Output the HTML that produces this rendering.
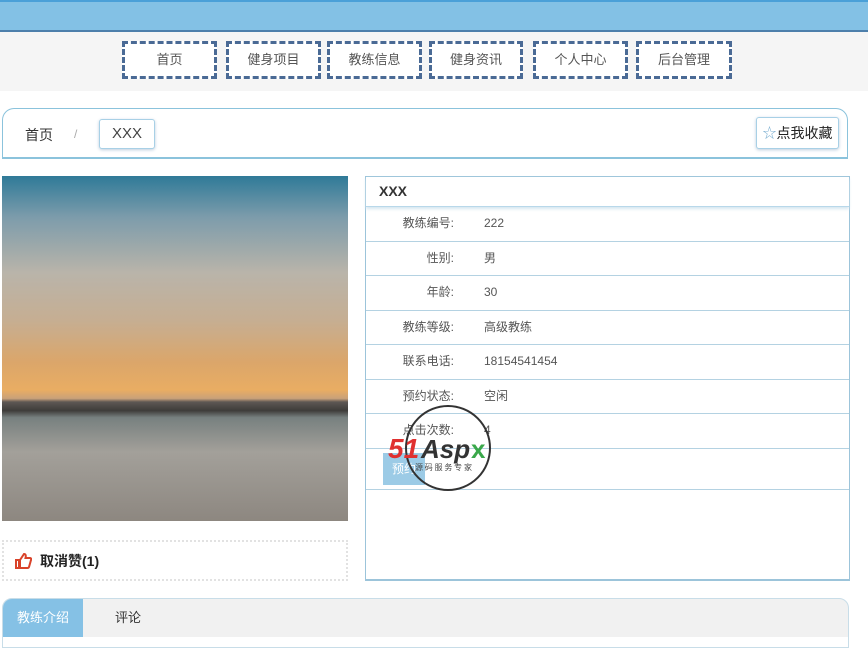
<!DOCTYPE html>
<html><head><meta charset="utf-8"><style>
*{margin:0;padding:0;box-sizing:border-box}
body{width:868px;height:641px;overflow:hidden;background:#fff;font-family:"Liberation Sans","Noto Sans CJK SC",sans-serif;position:relative;color:#333}
.a{position:absolute}
.top{left:0;top:0;width:868px;height:32px;background:#83c1e5;border-top:2px solid #4aa0d8;border-bottom:2px solid #4d7fab}
.navbg{left:0;top:32px;width:868px;height:59px;background:#f5f5f5}
.nav{top:41px;height:38px;border:3px dashed #4a6a95;background:#fff;font-size:13px;color:#555;text-align:center;line-height:32px}
.bc{left:2px;top:108px;width:846px;height:51px;border:1px solid #8bc3dc;border-top-left-radius:12px;border-top-right-radius:12px;border-bottom:2px solid #8bc3dc}
.btn{border:1px solid #a8d0e6;border-radius:3px;box-shadow:0 1px 3px #bcd;background:#fff;font-size:15px;text-align:center}
.img{left:2px;top:176px;width:346px;height:345px;background:linear-gradient(180deg,#2f7a98 0%,#7d9cab 12%,#b9b4aa 28%,#c6ae92 42%,#dba66a 54%,#e9ad63 62%,#c9a17a 64.5%,#5d5753 65.5%,#3e3c3a 68%,#77807f 70%,#a3a09a 80%,#8d8780 100%)}
.like{left:2px;top:540px;width:346px;height:41px;border:2px dotted #e2e2e2;font-size:14px;font-weight:bold;color:#222;line-height:38px;padding-left:36px}
.info{left:365px;top:176px;width:485px;height:405px;border:1px solid #9cc4da;border-bottom:2px solid #9cc4da}
.hd{height:30px;border-bottom:1px solid #b8d8ea;box-shadow:0 2px 3px #d5e6f0;font-weight:bold;font-size:14px;line-height:28px;padding-left:13px}
.row{height:34.5px;border-bottom:1px solid #b4d2e2;font-size:12px;color:#555;line-height:33px}
.row span{display:inline-block;width:88px;text-align:right}
.row b{font-weight:normal;margin-left:30px}
.tabs{left:2px;top:598px;width:847px;height:50px;border:1px solid #c8dde8;border-top-left-radius:10px;border-top-right-radius:10px;background:#f1f1f1;overflow:hidden}
</style></head><body>
<div class="a top"></div>
<div class="a navbg"></div>
<div class="a nav" style="left:122px;width:95px">首页</div>
<div class="a nav" style="left:226px;width:95px">健身项目</div>
<div class="a nav" style="left:327px;width:95px">教练信息</div>
<div class="a nav" style="left:429px;width:94px">健身资讯</div>
<div class="a nav" style="left:533px;width:95px">个人中心</div>
<div class="a nav" style="left:636px;width:96px">后台管理</div>
<div class="a bc"></div>
<div class="a" style="left:25px;top:125px;font-size:14px;color:#333">首页</div>
<div class="a" style="left:74px;top:127px;font-size:12px;color:#aaa">/</div>
<div class="a btn" style="left:99px;top:119px;width:56px;height:30px;line-height:28px;color:#444">XXX</div>
<div class="a btn" style="left:756px;top:117px;width:83px;height:32px;line-height:30px;font-size:14px;color:#222"><span style="color:#7aaed0">☆</span>点我收藏</div>
<div class="a img"></div>
<div class="a like"><svg class="a" style="left:10px;top:11px" width="18" height="16" viewBox="0 0 18 16"><path d="M2 7h3v8H2zM6 7l4-6c2 0 2 2 1.5 4H16c1 0 1.5 1 1 2l-2 7c-.3.7-1 1-1.5 1H6z" fill="none" stroke="#d9432a" stroke-width="2"/></svg>取消赞(1)</div>
<div class="a info">
<div class="hd">XXX</div>
<div class="row"><span>教练编号:</span><b>222</b></div>
<div class="row"><span>性别:</span><b>男</b></div>
<div class="row"><span>年龄:</span><b>30</b></div>
<div class="row"><span>教练等级:</span><b>高级教练</b></div>
<div class="row"><span>联系电话:</span><b>18154541454</b></div>
<div class="row"><span>预约状态:</span><b>空闲</b></div>
<div class="row"><span>点击次数:</span><b>4</b></div>
<div class="row" style="height:41px;position:relative"><div style="position:absolute;left:17px;top:4px;width:42px;height:32px;background:#9ccbe6;color:#fff;font-size:12px;line-height:32px;text-align:center">预约</div></div>
</div>
<svg class="a" style="left:385px;top:400px" width="130" height="95" viewBox="0 0 130 95"><circle cx="63" cy="48" r="42" fill="none" stroke="#333" stroke-width="2"/><text x="3" y="58" font-family="Liberation Sans" font-weight="bold" font-style="italic" font-size="28" fill="#e03030">51</text><text x="36" y="58" font-family="Liberation Sans" font-weight="bold" font-style="italic" font-size="26" fill="#333">Asp</text><text x="86" y="58" font-family="Liberation Sans" font-weight="bold" font-size="26" fill="#3aa84a">x</text><text x="30" y="70" font-size="8" fill="#444" font-family="Noto Sans CJK SC">源 码 服 务 专 家</text></svg>
<div class="a tabs"><div class="a" style="left:0;top:0;width:80px;height:38px;background:#85c1e5;color:#fff;font-size:13px;line-height:38px;text-align:center">教练介绍</div><div class="a" style="left:112px;top:0;font-size:13px;line-height:38px;color:#333">评论</div><div class="a" style="left:0;top:38px;width:847px;height:12px;background:#fff"></div></div>
</body></html>
